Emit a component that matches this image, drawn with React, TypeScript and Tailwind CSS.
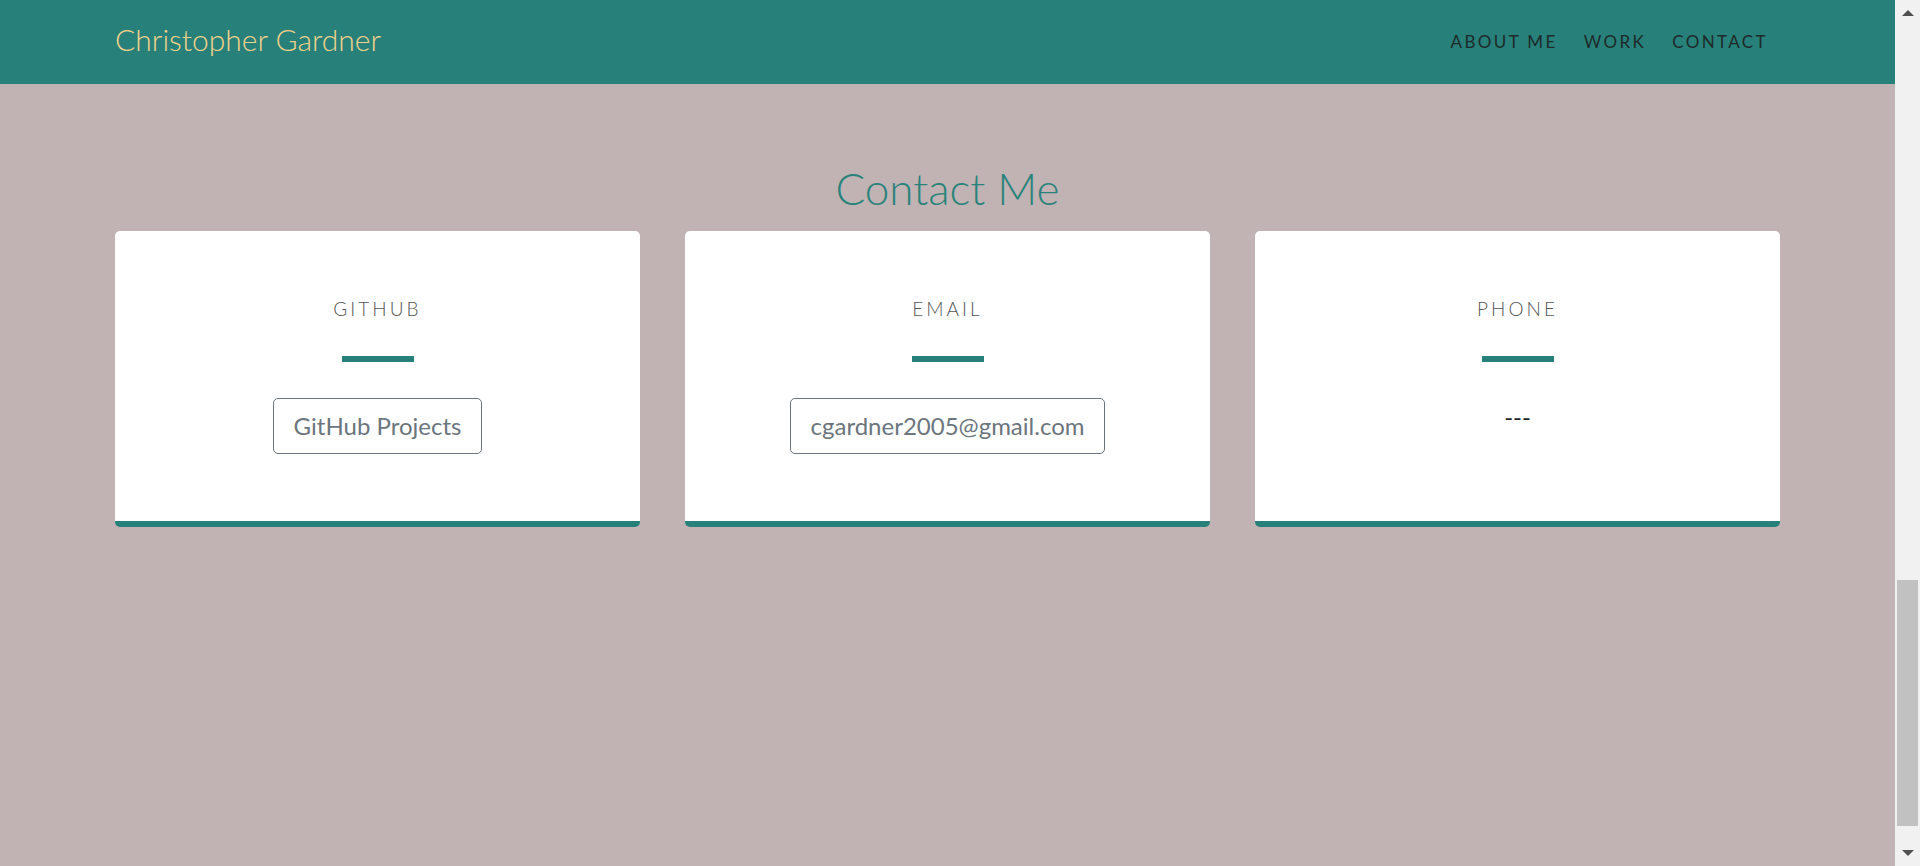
import React from "react";

type Contact = {
  label: string;
  value: string;
  kind: "button" | "text";
};

const contacts: Contact[] = [
  { label: "GITHUB", value: "GitHub Projects", kind: "button" },
  { label: "EMAIL", value: "cgardner2005@gmail.com", kind: "button" },
  { label: "PHONE", value: "---", kind: "text" },
];

const navLinks = ["ABOUT ME", "WORK", "CONTACT"];

const ContactCard: React.FC<{ contact: Contact }> = ({ contact }) => (
  <div className="flex h-[296px] flex-col items-center rounded-[5px] border-b-[6px] border-[#27817a] bg-white pt-[68px]">
    <h3 className="text-[19px] font-light leading-none tracking-[0.16em] text-[#555] [font-family:Lato,sans-serif]">
      {contact.label}
    </h3>
    <div className="mt-[38px] h-[6px] w-[72px] bg-[#27817a]" />
    <div className="mt-[36px] flex h-[56px] items-start justify-center">
      {contact.kind === "button" ? (
        <a className="flex h-[56px] items-center rounded-[5px] border border-[#6c757d] px-[20px] text-[24px] text-[#6c757d] [font-family:Lato,sans-serif]">
          {contact.value}
        </a>
      ) : (
        <span className="pt-[7px] text-[24px] leading-none text-[#212529] [font-family:Lato,sans-serif]">
          {contact.value}
        </span>
      )}
    </div>
  </div>
);

export default function App() {
  return (
    <div className="flex h-[866px] w-full overflow-hidden bg-[#c1b3b3]">
      <div className="flex flex-1 flex-col">
        <header className="flex h-[84px] items-center justify-between bg-[#27817a] px-[115px]">
          <span className="mb-[5px] text-[30px] font-light text-[#f2d28a] [font-family:Lato,sans-serif]">
            Christopher Gardner
          </span>
          <nav className="flex gap-[26px] pr-[12px]">
            {navLinks.map((link) => (
              <a
                key={link}
                className="text-[17px] tracking-[0.14em] text-[#1d2a29] [font-family:Lato,sans-serif]"
              >
                {link}
              </a>
            ))}
          </nav>
        </header>

        <main className="flex flex-col px-[115px]">
          <h2 className="mt-[78px] text-center text-[44px] font-light leading-[52px] text-[#2a837b] [font-family:Lato,sans-serif]">
            Contact Me
          </h2>
          <div className="mt-[17px] grid grid-cols-3 gap-[45px]">
            {contacts.map((c) => (
              <ContactCard key={c.label} contact={c} />
            ))}
          </div>
        </main>
      </div>

      {/* scrollbar */}
      <div className="flex w-[25px] flex-col items-center bg-[#f1f1f1]">
        <div className="mt-[10px] h-0 w-0 border-x-[6px] border-b-[6px] border-x-transparent border-b-[#505050]" />
        <div className="mt-[564px] h-[246px] w-[21px] bg-[#c1c1c1]" />
        <div className="mt-[24px] h-0 w-0 border-x-[6px] border-t-[6px] border-x-transparent border-t-[#505050]" />
      </div>
    </div>
  );
}
